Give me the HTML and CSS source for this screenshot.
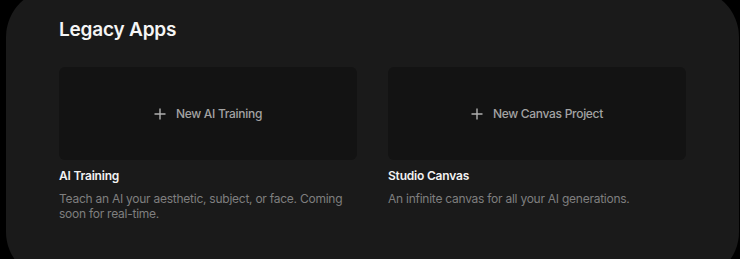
FILE: index.html
```html
<!DOCTYPE html>
<html lang="en">
<head>
    <meta charset="UTF-8">
    <meta name="viewport" content="width=device-width, initial-scale=1.0">
    <title>Legacy Apps</title>
    <link rel="stylesheet" href="styles.css">
</head>
<body>
    <section class="panel">
        <h2 class="panel-title">Legacy Apps</h2>
        <div class="app-grid">
            <div class="app">
                <button class="app-card">
                    <svg class="plus" viewBox="0 0 12 12" width="12" height="12"><path d="M6 0.5v11M0.5 6h11" /></svg>
                    <span>New AI Training</span>
                </button>
                <h3 class="app-name">AI Training</h3>
                <p class="app-desc">Teach an AI your aesthetic, subject, or face. Coming soon for real-time.</p>
            </div>
            <div class="app">
                <button class="app-card">
                    <svg class="plus" viewBox="0 0 12 12" width="12" height="12"><path d="M6 0.5v11M0.5 6h11" /></svg>
                    <span>New Canvas Project</span>
                </button>
                <h3 class="app-name">Studio Canvas</h3>
                <p class="app-desc">An infinite canvas for all your AI generations.</p>
            </div>
        </div>
    </section>
</body>
</html>
```

FILE: styles.css
```css
* {
    margin: 0;
    padding: 0;
    box-sizing: border-box;
}

body {
    background: #000;
    font-family: Inter, "Noto Sans", sans-serif;
    overflow: hidden;
}

.panel {
    margin: -11px 0 0 6px;
    width: 733px;
    height: 291px;
    padding: 29px 53px 0;
    background: #1a1a1a;
    border-radius: 48px;
}

.panel-title {
    font-size: 19px;
    line-height: 24px;
    font-weight: 600;
    color: #f5f5f5;
    letter-spacing: -0.2px;
}

.app-grid {
    display: grid;
    grid-template-columns: 1fr 1fr;
    column-gap: 31px;
    margin-top: 25px;
}

.app-card {
    width: 100%;
    height: 93px;
    display: flex;
    align-items: center;
    justify-content: center;
    gap: 10px;
    background: #131313;
    border: none;
    border-radius: 6px;
    color: #a3a3a3;
    font-family: inherit;
    font-size: 12px;
    font-weight: 500;
    letter-spacing: -0.3px;
}

.plus {
    stroke: #b0b0b0;
    stroke-width: 1.4;
    fill: none;
}

.app-name {
    margin-top: 8px;
    font-size: 12px;
    line-height: 16px;
    font-weight: 600;
    color: #f2f2f2;
    letter-spacing: -0.2px;
}

.app-desc {
    margin-top: 7px;
    font-size: 12px;
    line-height: 15px;
    color: #7f7f7f;
    letter-spacing: -0.25px;
}
```
